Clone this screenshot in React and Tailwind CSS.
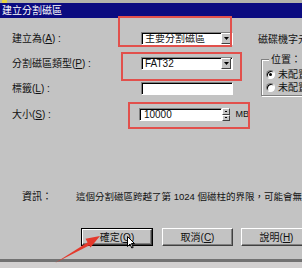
import React from "react";

const font = "font-['Liberation_Sans','Noto_Sans_CJK_TC',sans-serif]";

// sunken white field (Win95 style)
function Field({ children, className = "" }) {
  return (
    <div
      className={`h-[13px] bg-white border border-t-[#808080] border-l-[#808080] border-b-white border-r-white shadow-[inset_1px_1px_0_#000] flex items-center ${className}`}>
      {children}
    </div>
  );
}

function DropButton() {
  return (
    <div className="ml-auto w-[10px] h-[11px] bg-[#c3c3c3] border border-t-white border-l-white border-b-[#404040] border-r-[#404040] flex items-center justify-center">
      <svg width="5" height="3" viewBox="0 0 5 3">
        <path d="M0 0h5L2.5 3z" fill="#000" />
      </svg>
    </div>
  );
}

function Combo({ value }) {
  return (
    <Field className="w-[92px] pl-[3px] pr-[1px]">
      <span className="leading-[11px] whitespace-nowrap">{value}</span>
      <DropButton />
    </Field>
  );
}

function Label({ text, mnemonic }) {
  return (
    <div className="w-[129px] leading-[13px] whitespace-nowrap">
      {text}(<span className="underline">{mnemonic}</span>)&nbsp;:
    </div>
  );
}

function Button({ children, primary }) {
  return (
    <div
      className={`h-[18px] ${primary ? "w-[72px] border border-black" : "w-[71px]"} shrink-0`}>
      <div className="h-full bg-[#c3c3c3] border border-t-white border-l-white border-b-[#404040] border-r-[#404040] shadow-[inset_-1px_-1px_0_#808080] flex items-center justify-center leading-[13px] whitespace-nowrap">
        {children}
      </div>
    </div>
  );
}

function Radio({ checked, label }) {
  return (
    <div className="flex items-center h-[13px] gap-[3px]">
      <div className="w-[9px] h-[9px] rounded-full bg-white border border-t-[#808080] border-l-[#808080] border-b-white border-r-white shadow-[inset_1px_1px_0_#000] flex items-center justify-center">
        {checked && <div className="w-[3px] h-[3px] rounded-full bg-black" />}
      </div>
      <span className="whitespace-nowrap leading-[13px]">{label}</span>
    </div>
  );
}

export default function App() {
  return (
    <div
      className={`relative w-[302px] h-[268px] overflow-hidden bg-[#c3c3c3] text-[10px] text-[#111] ${font}`}>
      {/* strip above title */}
      <div className="h-[3px] bg-[#b4b4ac] pl-[2px] flex">
        <div className="w-[5px] h-[3px] bg-[#e8d640]" />
      </div>

      {/* title bar */}
      <div className="h-[15px] bg-[#0b0b80] text-white text-[10px] leading-[15px] pl-[2px]">
        建立分割磁區
      </div>

      {/* form area */}
      <div className="flex">
        <div className="w-[249px] shrink-0 pl-[12px] pt-[14px] flex flex-col">
          <div className="flex items-center h-[13px]">
            <Label text="建立為" mnemonic="A" />
            <Combo value="主要分割磁區" />
          </div>
          <div className="flex items-center h-[13px] mt-[12px]">
            <Label text="分割磁區類型" mnemonic="P" />
            <Combo value="FAT32" />
          </div>
          <div className="flex items-center h-[13px] mt-[12px]">
            <Label text="標籤" mnemonic="L" />
            <Field className="w-[92px]" />
          </div>
          <div className="flex items-center h-[13px] mt-[13px]">
            <Label text="大小" mnemonic="S" />
            <Field className="w-[84px] pl-[4px]">
              <span className="leading-[11px]">10000</span>
            </Field>
            <div className="w-[8px] h-[13px] flex flex-col">
              <div className="h-[6.5px] bg-[#c3c3c3] border border-t-white border-l-white border-b-[#404040] border-r-[#404040] flex items-center justify-center">
                <div className="w-[2px] h-[1px] bg-black" />
              </div>
              <div className="h-[6.5px] bg-[#c3c3c3] border border-t-white border-l-white border-b-[#404040] border-r-[#404040] flex items-center justify-center">
                <div className="w-[2px] h-[1px] bg-black" />
              </div>
            </div>
            <span className="ml-[6px] text-[9px] leading-[13px]">MB</span>
          </div>
        </div>

        <div className="pt-[15px] pl-[9px] flex flex-col">
          <div className="leading-[13px] whitespace-nowrap">磁碟機字元</div>
          <div className="relative mt-[13px] ml-[3px] w-[60px] h-[37px] border border-[#808080] shadow-[1px_1px_0_#fff,inset_1px_1px_0_#fff] pl-[4px] pt-[8px] flex flex-col gap-[0px]">
            <span className="absolute -top-[7px] left-[7px] px-[2px] bg-[#c3c3c3] leading-[13px] whitespace-nowrap">
              位置：
            </span>
            <Radio checked label="未配置" />
            <Radio label="未配置" />
          </div>
        </div>
      </div>

      {/* info */}
      <div className="flex mt-[69px] h-[13px] leading-[13px] whitespace-nowrap">
        <span className="pl-[22px] w-[76px] shrink-0">資訊：</span>
        <span className="text-[9.5px]">這個分割磁區跨越了第 1024 個磁柱的界限，可能會無法開機</span>
      </div>

      {/* buttons */}
      <div className="flex mt-[25px] pl-[81px]">
        <Button primary>
          確定(<span className="underline">O</span>)
        </Button>
        <div className="ml-[9px]">
          <Button>
            取消(<span className="underline">C</span>)
          </Button>
        </div>
        <div className="ml-[8px]">
          <Button>
            說明(<span className="underline">H</span>)
          </Button>
        </div>
      </div>

      {/* bottom edge */}
      <div className="mt-[13px] h-[3px] bg-[#727272]" />
      <div className="h-[6px] bg-[#d2d0d0]" />

      {/* annotation boxes */}
      <div className="absolute left-[118px] top-[16px] w-[114px] h-[31px] border-2 border-[#e2504c]" />
      <div className="absolute left-[121px] top-[52px] w-[121px] h-[29px] border-2 border-[#e2504c]" />
      <div className="absolute left-[128px] top-[102px] w-[122px] h-[27px] border-2 border-[#e2504c]" />

      {/* red arrow */}
      <svg
        className="absolute left-0 top-0 pointer-events-none"
        width="302"
        height="268"
        viewBox="0 0 302 268">
        <path d="M55 263 L89 241.5 L91 244.5 Z" fill="#e4392c" />
        <path d="M100 236 L85.5 238.8 L90.5 247.4 Z" fill="#e4392c" />
      </svg>

      {/* mouse cursor */}
      <svg
        className="absolute left-[127px] top-[236px]"
        width="8"
        height="13"
        viewBox="0 0 8 13">
        <path
          d="M0.5 0.5 L0.5 10.5 L3 8 L4.8 12 L6.2 11.4 L4.4 7.5 L7.5 7.5 Z"
          fill="#fff"
          stroke="#000"
          strokeWidth="1"
        />
      </svg>
    </div>
  );
}
